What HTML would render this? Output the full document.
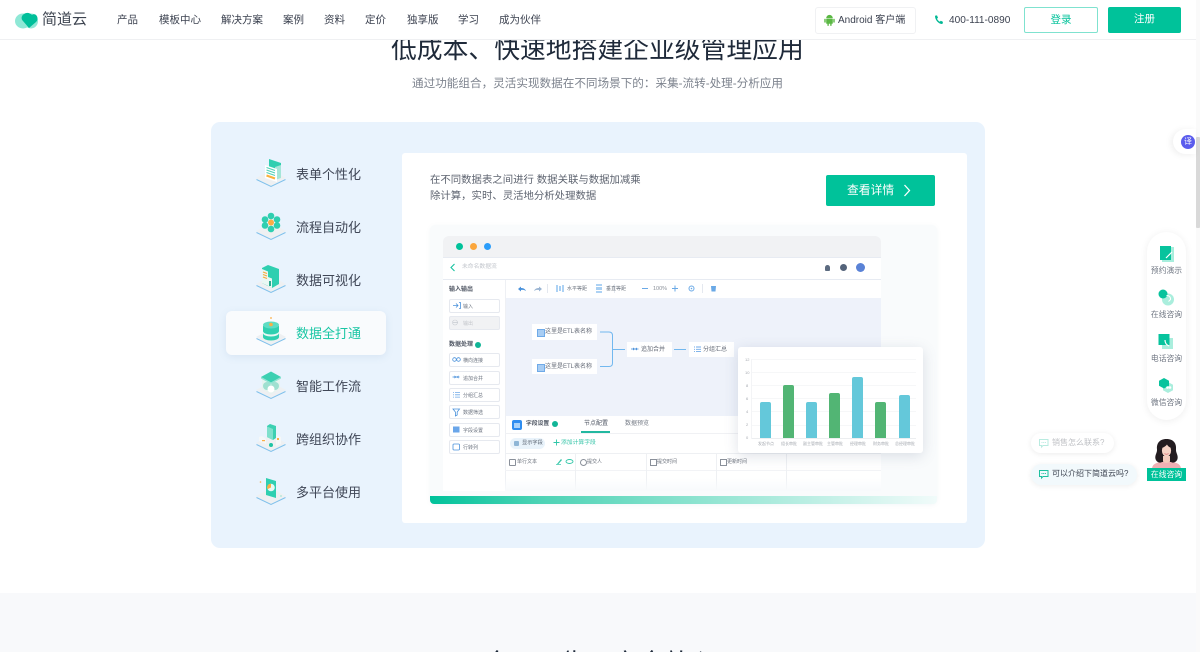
<!DOCTYPE html>
<html lang="zh-CN">
<head>
<meta charset="utf-8">
<title>简道云</title>
<style>
html,body{margin:0;padding:0;width:1200px;height:652px;overflow:hidden;background:#fff}
body{position:relative;font-family:"Liberation Sans","Noto Sans CJK SC",sans-serif;color:#333}
.a,.t{position:absolute}
.t{white-space:nowrap;line-height:16px}
svg{display:block;overflow:visible}
.nav{top:12px;font-size:10.5px;color:#3c4250}
.m{left:296px;font-size:13px;color:#3f4656;line-height:20px}
.ic{left:256px;width:30px;height:28px}
.si{left:449px;width:49px;height:12px;border:1px solid #e6e9ef;border-radius:2px;background:#fff}
.st{left:463px;font-size:5px;color:#6d7480}
.node{background:#fff;height:15px}
.nt{font-size:6px;color:#666c78}
.cl{font-size:4px;color:#a5a9b0}
.bar{position:absolute;width:11px;border-radius:2px 2px 0 0}
.grid{position:absolute;left:751px;width:165px;height:1px;background:#f6f7f8}
.vl{position:absolute;width:1px;background:#eef0f3;top:454px;height:37px}
.sl{font-size:7.8px;color:#6f7682;left:1147px;width:39px;text-align:center}
</style>
</head>
<body>

<!-- scrollbar track -->
<div class="a" style="left:1196px;top:0;width:4px;height:652px;background:#fafafa"></div>

<!-- title -->
<div class="t" style="left:391px;top:35px;line-height:30px;font-size:25.8px;color:#1f2a3a">低成本、快速地搭建企业级管理应用</div>
<div class="t" style="left:412px;top:76px;font-size:11.6px;color:#7d838e">通过功能组合，灵活实现数据在不同场景下的：采集-流转-处理-分析应用</div>

<!-- header -->
<div class="a" style="left:0;top:0;width:1196px;height:39px;background:#fff;border-bottom:1px solid #eff0f2;box-sizing:content-box"></div>
<svg class="a" style="left:15px;top:12px" width="24" height="17" viewBox="0 0 24 17">
  <ellipse cx="8" cy="9" rx="8" ry="7.5" fill="#8fe8d6"/>
  <ellipse cx="16" cy="9" rx="7" ry="7.5" fill="#8fe8d6"/>
  <path d="M9 2c3-2 6-1 8 1 1-1 3-1 4 0 2 2 2 5 0 7l-7 6-6-7C6 7 6 4 9 2z" fill="#00bf9a"/>
</svg>
<div class="t" style="left:42px;top:12px;font-size:15px;color:#3d4450;line-height:16px">简道云</div>
<div class="t nav" style="left:117px">产品</div>
<div class="t nav" style="left:159px">模板中心</div>
<div class="t nav" style="left:221px">解决方案</div>
<div class="t nav" style="left:283px">案例</div>
<div class="t nav" style="left:324px">资料</div>
<div class="t nav" style="left:365px">定价</div>
<div class="t nav" style="left:407px">独享版</div>
<div class="t nav" style="left:458px">学习</div>
<div class="t nav" style="left:499px">成为伙伴</div>

<div class="a" style="left:815px;top:7px;width:99px;height:25px;border:1px solid #f0f1f3;border-radius:3px;background:#fff"></div>
<svg class="a" style="left:824px;top:14px" width="11" height="12" viewBox="0 0 11 12">
  <path d="M2.2 4.2a3.3 3.3 0 0 1 6.6 0z" fill="#5bb844"/>
  <rect x="2.2" y="4.7" width="6.6" height="5" rx=".6" fill="#5bb844"/>
  <rect x=".3" y="4.7" width="1.4" height="4" rx=".7" fill="#5bb844"/>
  <rect x="9.3" y="4.7" width="1.4" height="4" rx=".7" fill="#5bb844"/>
  <rect x="3.4" y="9" width="1.4" height="3" rx=".7" fill="#5bb844"/>
  <rect x="6.2" y="9" width="1.4" height="3" rx=".7" fill="#5bb844"/>
</svg>
<div class="t" style="left:838px;top:14px;line-height:13px;font-size:10px;color:#3c4250">Android 客户端</div>
<svg class="a" style="left:934px;top:15px" width="10" height="10" viewBox="0 0 10 10">
  <path d="M1 .8 3 .4l1 2.4-1 1c.5 1.2 1.5 2.300 2.800 2.900l1-1 2.200 1.200-.5 2C5 9.500 .9 5.200 1 .8z" fill="#00b894"/>
</svg>
<div class="t" style="left:949px;top:14px;line-height:13px;font-size:10.1px;color:#3c4250">400-111-0890</div>
<div class="a" style="left:1024px;top:7px;width:72px;height:24px;border:1px solid #7fe2cf;border-radius:2px;background:#fff;color:#00c29a;font-size:10.5px;line-height:24px;text-align:center">登录</div>
<div class="a" style="left:1108px;top:7px;width:73px;height:26px;border-radius:2px;background:#00c29a;color:#fff;font-size:10.5px;line-height:25px;text-align:center">注册</div>

<!-- main panel -->
<div class="a" style="left:211px;top:122px;width:774px;height:426px;background:#e9f3fd;border-radius:9px"></div>
<div class="a" style="left:402px;top:153px;width:565px;height:370px;background:#fff;border-radius:3px"></div>
<div class="a" style="left:226px;top:311px;width:160px;height:44px;background:#f9fbfd;border-radius:6px;box-shadow:0 2px 8px rgba(90,130,170,.12)"></div>

<!-- menu texts -->
<div class="t m" style="top:165px">表单个性化</div>
<div class="t m" style="top:218px">流程自动化</div>
<div class="t m" style="top:271px">数据可视化</div>
<div class="t m" style="top:324px;color:#19c6a4">数据全打通</div>
<div class="t m" style="top:377px">智能工作流</div>
<div class="t m" style="top:430px">跨组织协作</div>
<div class="t m" style="top:483px">多平台使用</div>

<!-- menu icons -->
<svg class="a ic" style="top:159px" viewBox="0 0 30 28">
  <path d="M0 19 15 11 30 19 15 27z" fill="#eef0f2"/><path d="M0.500 20.500 15 27.500 29.500 20.500" fill="none" stroke="#80c0ea" stroke-width="1"/>
  <path d="M13 0 25 4V19L13 15z" fill="#2fcfb0"/><path d="M19 8 25 6V19L19 21z" fill="#a5e6d8"/>
  <path d="M9 6 21 10V23L9 19z" fill="#fff"/>
  <path d="M10.500 8.500 19 11.500M10.500 11 19 14M10.500 13.500 19 16.500" stroke="#4fd0b6" stroke-width="1"/>
  <path d="M10.500 16.500 19 19.500" stroke="#fbb03b" stroke-width="2"/>
</svg>
<svg class="a ic" style="top:212px" viewBox="0 0 30 28">
  <path d="M0 19 15 11 30 19 15 27z" fill="#eef0f2"/><path d="M0.500 20.500 15 27.500 29.500 20.500" fill="none" stroke="#80c0ea" stroke-width="1"/>
  <g fill="#2fcfb0"><circle cx="15" cy="4" r="3.300"/><circle cx="9" cy="7.500" r="3.300"/><circle cx="21" cy="7.500" r="3.300"/><circle cx="9" cy="13.500" r="3.300"/><circle cx="21" cy="13.500" r="3.300"/><circle cx="15" cy="17" r="3.300"/></g>
  <circle cx="15" cy="10.500" r="3" fill="#fbae45"/>
</svg>
<svg class="a ic" style="top:265px" viewBox="0 0 30 28">
  <path d="M0 19 15 11 30 19 15 27z" fill="#eef0f2"/><path d="M0.500 20.500 15 27.500 29.500 20.500" fill="none" stroke="#80c0ea" stroke-width="1"/>
  <path d="M6 3 12 0 23 4 23 19 16 23 6 18z" fill="#2fcfb0"/><path d="M6 4 12 6.500V20.800L6 18z" fill="#e9f7f3"/><path d="M12 12 16 13.500V23L12 21z" fill="#e9f7f3"/>
  <path d="M7 7l4 1.500M7 9.500l4 1.500M7 12l4 1.500" stroke="#f7a93a" stroke-width="1.200"/><path d="M14 16v5" stroke="#2fa98f" stroke-width="2"/>
</svg>
<svg class="a ic" style="top:318px" viewBox="0 0 30 28">
  <path d="M0 19 15 11 30 19 15 27z" fill="#eef0f2"/><path d="M0.500 20.500 15 27.500 29.500 20.500" fill="none" stroke="#80c0ea" stroke-width="1"/>
  <path d="M7 8v11c0 2 3.600 3.500 8 3.500s8-1.500 8-3.500V8z" fill="#2fd0b0"/><path d="M7 13c0 2 3.600 3.500 8 3.500s8-1.500 8-3.500v2c0 2-3.600 3.500-8 3.500S7 17 7 15z" fill="#e7f8f4"/>
  <ellipse cx="15" cy="7" rx="8" ry="3.500" fill="#5edcc3"/><circle cx="15" cy="6.500" r="1.800" fill="#fbae45"/><circle cx="15" cy="0" r=".9" fill="#fbae45"/>
</svg>
<svg class="a ic" style="top:371px" viewBox="0 0 30 28">
  <path d="M0 19 15 11 30 19 15 27z" fill="#eef0f2"/><path d="M0.500 20.500 15 27.500 29.500 20.500" fill="none" stroke="#80c0ea" stroke-width="1"/>
  <path d="M6 8V18L15 23 24 18V8z" fill="#e6f4f0"/><circle cx="11" cy="15" r="4" fill="#9fe0d0"/><circle cx="19" cy="15" r="4" fill="#9fe0d0"/><circle cx="15" cy="18" r="3.500" fill="#fff"/>
  <path d="M5 6 15 .5 25 6 15 11.500z" fill="#3cd0b2"/><path d="M5 6V7.500L15 13 25 7.500V6L15 11.500z" fill="#8fe3d2"/>
</svg>
<svg class="a ic" style="top:424px" viewBox="0 0 30 28">
  <path d="M0 19 15 11 30 19 15 27z" fill="#eef0f2"/><path d="M0.500 20.500 15 27.500 29.500 20.500" fill="none" stroke="#80c0ea" stroke-width="1"/>
  <path d="M11 2 14 0 20 2V14L17 16 11 13z" fill="#3cd0b2"/><path d="M11 2.500 17 5V16L11 13z" fill="#7fe0cc"/>
  <path d="M20 11l5 2v7l-5 2z" fill="#f5f7f8"/><path d="M6 12 3 13v4l7 3V15z" fill="#f5f7f8"/>
  <circle cx="15" cy="21" r="2" fill="#1fc4a4"/><rect x="6" y="16" width="3" height="1.200" fill="#fbae45"/><rect x="21" y="14" width="2" height="2" fill="#fbae45"/>
</svg>
<svg class="a ic" style="top:477px" viewBox="0 0 30 28">
  <path d="M0 19 15 11 30 19 15 27z" fill="#eef0f2"/><path d="M0.500 20.500 15 27.500 29.500 20.500" fill="none" stroke="#80c0ea" stroke-width="1"/>
  <path d="M10 0 20 3V20L10 17z" fill="#2fcfb0" transform="translate(0,1)"/><circle cx="15" cy="10.500" r="3.800" fill="#e8f8f4"/><path d="M15 10.500V6.700a3.800 3.800 0 0 0-3.500 5.400z" fill="#fbae45"/>
  <circle cx="4.500" cy="5" r=".8" fill="#fbae45"/><circle cx="25" cy="19" r="1" fill="#b8e8dc"/>
</svg>

<!-- description + button -->
<div class="t" style="left:430px;top:173px;font-size:10.4px;color:#5e6470">在不同数据表之间进行 数据关联与数据加减乘</div>
<div class="t" style="left:430px;top:189px;font-size:10.4px;color:#5e6470">除计算，实时、灵活地分析处理数据</div>
<div class="a" style="left:826px;top:175px;width:109px;height:31px;background:#00c29a;border-radius:2px"></div>
<div class="t" style="left:847px;top:182px;font-size:11.8px;color:#fff">查看详情</div>
<svg class="a" style="left:903px;top:184px" width="8" height="13" viewBox="0 0 8 13"><path d="M1.500 1 6.500 6.500 1.500 12" fill="none" stroke="#fff" stroke-width="1.300"/></svg>

<!-- mock app container -->
<div class="a" style="left:430px;top:225px;width:507px;height:279px;background:#f9fbfc;border-radius:5px;box-shadow:0 1px 4px rgba(120,140,160,.08)"></div>
<div class="a" style="left:443px;top:236px;width:438px;height:21px;background:#f1f2f4;border-radius:6px 6px 0 0"></div>
<div class="a" style="left:443px;top:257px;width:438px;height:234px;background:#fff"></div>
<div class="a" style="left:443px;top:257px;width:438px;height:1px;background:#e7ebf2"></div>
<div class="a" style="left:443px;top:279px;width:438px;height:1px;background:#e7ebf2"></div>
<div class="a" style="left:505px;top:280px;width:1px;height:211px;background:#eef0f4"></div>
<div class="a" style="left:506px;top:298px;width:375px;height:118px;background:#eef2fa"></div>
<div class="a" style="left:456px;top:243px;width:7px;height:7px;border-radius:50%;background:#00c29a"></div>
<div class="a" style="left:470px;top:243px;width:7px;height:7px;border-radius:50%;background:#fba63c"></div>
<div class="a" style="left:484px;top:243px;width:7px;height:7px;border-radius:50%;background:#2b9dfa"></div>

<svg class="a" style="left:450px;top:263px" width="6" height="9" viewBox="0 0 6 9"><path d="M4.500 1 1 4.500 4.500 8" fill="none" stroke="#17c3a0" stroke-width="1.100"/></svg>
<div class="t" style="left:462px;top:259px;font-size:5.8px;color:#c2c6cc">未命名数据流</div>
<div class="a" style="left:825px;top:265px;width:5px;height:6px;background:#5c6b80;border-radius:2.500px 2.500px 1px 1px"></div>
<div class="a" style="left:840px;top:264px;width:7px;height:7px;background:#54637a;border-radius:50%"></div>
<div class="a" style="left:856px;top:263px;width:9px;height:9px;background:#5a82d6;border-radius:50%"></div>

<!-- toolbar -->
<svg class="a" style="left:505px;top:280px" width="376" height="18" viewBox="0 0 376 18">
  <path d="M13 9l3-2.500v1.500c2 0 4 .5 5 3-1.500-1-3-1.200-5-1v1.500z" fill="#4b92db"/>
  <path d="M37 9l-3-2.500v1.500c-2 0-4 .5-5 3 1.500-1 3-1.200 5-1v1.500z" fill="#9ab4d2"/>
  <rect x="42" y="4" width="1" height="9" fill="#e4e8ef"/>
  <path d="M52 5v7M58 5v7" stroke="#5ba5e8" stroke-width="1"/><path d="M54 6v5h2V6z" fill="#a8cff2"/>
  <path d="M91 5h6M91 12h6" stroke="#5ba5e8" stroke-width="1"/><rect x="91" y="7" width="6" height="3" fill="#a8cff2"/>
  <rect x="109" y="4" width="1" height="9" fill="#e4e8ef"/>
  <path d="M137 8.500h6" stroke="#6aa9e6" stroke-width="1"/>
  <path d="M167 8.500h6M170 5.500v6" stroke="#6aa9e6" stroke-width="1"/>
  <circle cx="186.500" cy="8.500" r="2.500" fill="none" stroke="#6aa9e6" stroke-width="1"/><circle cx="186.500" cy="8.500" r=".8" fill="#6aa9e6"/>
  <rect x="197" y="4" width="1" height="9" fill="#e4e8ef"/>
  <path d="M206 6h5l-.5 5.500h-4z" fill="#6aa9e6"/>
</svg>
<div class="t cl" style="left:567px;top:281px;font-size:5px;color:#6e7580">水平等距</div>
<div class="t cl" style="left:606px;top:281px;font-size:5px;color:#6e7580">垂直等距</div>
<div class="t cl" style="left:653px;top:281px;font-size:5.500px;color:#8a9099">100%</div>

<!-- sidebar -->
<div class="t" style="left:449px;top:282px;font-size:6px;color:#4f5663;font-weight:bold">输入输出</div>
<div class="a si" style="top:299px"></div>
<div class="t st" style="top:299px">输入</div>
<div class="a si" style="top:316px;background:#f1f2f4"></div>
<div class="t st" style="top:316px;color:#c2c5ca">输出</div>
<div class="t" style="left:449px;top:337px;font-size:6px;color:#4f5663;font-weight:bold">数据处理</div>
<div class="a" style="left:475px;top:342px;width:6px;height:6px;border-radius:50%;background:#11b597"></div>
<div class="a si" style="top:353px"></div><div class="t st" style="top:353px">横向连接</div>
<div class="a si" style="top:371px"></div><div class="t st" style="top:371px">追加合并</div>
<div class="a si" style="top:388px"></div><div class="t st" style="top:388px">分组汇总</div>
<div class="a si" style="top:405px"></div><div class="t st" style="top:405px">数据筛选</div>
<div class="a si" style="top:423px"></div><div class="t st" style="top:423px">字段设置</div>
<div class="a si" style="top:440px"></div><div class="t st" style="top:440px">行转列</div>
<svg class="a" style="left:452px;top:300px" width="10" height="152" viewBox="0 0 10 152">
  <path d="M1 5.500h5M4 3.500l2 2-2 2" fill="none" stroke="#4b92db" stroke-width=".8"/><path d="M7 2.500h1.500v6H7" fill="none" stroke="#4b92db" stroke-width=".8"/>
  <path d="M1 22.500h5" stroke="#c8ccd2" stroke-width=".8"/><circle cx="3" cy="22.500" r="2.500" fill="none" stroke="#c8ccd2" stroke-width=".6"/>
  <circle cx="2.500" cy="59.500" r="1.800" fill="none" stroke="#4b92db" stroke-width=".8"/><circle cx="6.500" cy="59.500" r="1.800" fill="none" stroke="#4b92db" stroke-width=".8"/>
  <path d="M0.500 77h7" stroke="#4b92db" stroke-width=".8"/><path d="M2.500 75.500l2 1.500 2-1.500v3l-2-1.500-2 1.500z" fill="#4b92db"/>
  <path d="M1 92.500h1M3 92.500h5M1 94.800h1M3 94.800h5M1 97.100h1M3 97.100h5" stroke="#6fa9e8" stroke-width=".8"/>
  <path d="M1 109h6.500l-2.300 3v3l-1.800 1v-4z" fill="none" stroke="#4b92db" stroke-width=".8"/>
  <rect x="1" y="126.500" width="6.500" height="6" fill="#6aa6ea"/>
  <rect x="1" y="144" width="6.500" height="6" rx="1" fill="none" stroke="#4b92db" stroke-width=".8"/>
</svg>

<!-- flow connectors -->
<svg class="a" style="left:525px;top:320px" width="215" height="60" viewBox="0 0 215 60">
  <path d="M75 12h9q3.500 0 3.500 3.500V43q0 3.500-3.500 3.500h-9" fill="none" stroke="#72b8ef" stroke-width="1"/>
  <path d="M87.500 29.500H100M149 29.500h12" stroke="#72b8ef" stroke-width="1"/>
</svg>
<div class="a node" style="left:532px;top:324px;width:65px;height:16px"></div>
<div class="a node" style="left:532px;top:359px;width:65px"></div>
<div class="a node" style="left:627px;top:342px;width:45px"></div>
<div class="a node" style="left:689px;top:342px;width:45px"></div>
<div class="a" style="left:537px;top:329px;width:6px;height:6px;background:#a8cdf3;border:.5px solid #6faae8"></div>
<div class="a" style="left:537px;top:364px;width:6px;height:6px;background:#a8cdf3;border:.5px solid #6faae8"></div>
<svg class="a" style="left:631px;top:346px" width="8" height="6" viewBox="0 0 8 6"><path d="M0 3h7.500" stroke="#4b92db" stroke-width=".8"/><path d="M2 1.500l2 1.500 2-1.500v3l-2-1.500-2 1.500z" fill="#4b92db"/></svg>
<svg class="a" style="left:694px;top:346px" width="7" height="7" viewBox="0 0 7 7"><path d="M0 1h1M2 1h5M0 3.300h1M2 3.300h5M0 5.600h1M2 5.600h5" stroke="#6fa9e8" stroke-width=".9"/></svg>
<div class="t nt" style="left:545px;top:324px">这里是ETL表名称</div>
<div class="t nt" style="left:545px;top:359px">这里是ETL表名称</div>
<div class="t nt" style="left:641px;top:342px">追加合并</div>
<div class="t nt" style="left:703px;top:342px">分组汇总</div>

<!-- bottom panel -->
<div class="a" style="left:512px;top:420px;width:10px;height:10px;border-radius:2px;background:#2f8df0"></div>
<div class="a" style="left:514px;top:423px;width:6px;height:5px;background:#a8d2fa"></div>
<div class="t" style="left:526px;top:416px;font-size:5.800px;color:#4f5663;font-weight:bold">字段设置</div>
<div class="a" style="left:552px;top:421px;width:6px;height:6px;border-radius:50%;background:#11b597"></div>
<div class="t" style="left:584px;top:416px;font-size:6px;color:#4f5663">节点配置</div>
<div class="t" style="left:625px;top:416px;font-size:6px;color:#767c87">数据预览</div>
<div class="a" style="left:581px;top:431px;width:29px;height:2px;background:#22b8a0"></div>
<div class="a" style="left:505px;top:433px;width:376px;height:1px;background:#f0f1f4"></div>
<div class="a" style="left:510px;top:438px;width:35px;height:11px;border-radius:6px;background:#e9f3fb"></div>
<div class="a" style="left:514px;top:441px;width:5px;height:5px;background:#8fb6d6;border-radius:1px"></div>
<div class="t" style="left:522px;top:435px;font-size:5.200px;color:#56606e">显示字段</div>
<svg class="a" style="left:553px;top:439px" width="7" height="7" viewBox="0 0 7 7"><path d="M3.500 .5v6M.5 3.500h6" stroke="#2fc6a8" stroke-width=".9"/></svg>
<div class="t" style="left:561px;top:435px;font-size:5.800px;color:#35c4a8">添加计算字段</div>

<div class="a" style="left:505px;top:453px;width:376px;height:1px;background:#eef0f3"></div>
<div class="a" style="left:505px;top:470px;width:376px;height:1px;background:#f2f3f6"></div>
<div class="vl" style="left:575px"></div><div class="vl" style="left:646px"></div><div class="vl" style="left:716px"></div><div class="vl" style="left:786px"></div>
<div class="a" style="left:509px;top:459px;width:5px;height:5px;border:.7px solid #8a909a;border-radius:1px"></div>
<div class="a" style="left:580px;top:459px;width:5px;height:5px;border:.7px solid #8a909a;border-radius:50%"></div>
<div class="a" style="left:650px;top:459px;width:5px;height:5px;border:.7px solid #8a909a"></div>
<div class="a" style="left:720px;top:459px;width:5px;height:5px;border:.7px solid #8a909a"></div>
<div class="t" style="left:517px;top:454px;font-size:5px;color:#6a707b">单行文本</div>
<div class="t" style="left:587px;top:454px;font-size:5px;color:#6a707b">提交人</div>
<div class="t" style="left:657px;top:454px;font-size:5px;color:#6a707b">提交时间</div>
<div class="t" style="left:727px;top:454px;font-size:5px;color:#6a707b">更新时间</div>
<svg class="a" style="left:556px;top:458px" width="18" height="7" viewBox="0 0 18 7"><path d="M1 6 5 1l1 1-4 4.500z" fill="#36c7a9"/><path d="M0 6.500h5" stroke="#36c7a9" stroke-width=".7"/><ellipse cx="13.500" cy="3.500" rx="3.500" ry="2" fill="none" stroke="#36c7a9" stroke-width=".9"/></svg>
<div class="a" style="left:505px;top:478px;width:376px;height:13px;background:linear-gradient(rgba(248,250,252,0),#f8fafc)"></div>

<!-- gradient bar -->
<div class="a" style="left:430px;top:496px;width:507px;height:8px;border-radius:0 0 4px 4px;background:linear-gradient(90deg,#00c29a 0%,#4ed3b5 22%,#9ce7d6 60%,#f1fbfa 100%)"></div>

<!-- chart -->
<div class="a" style="left:738px;top:347px;width:185px;height:106px;background:#fff;border-radius:3px;box-shadow:0 3px 14px rgba(90,105,135,.2)"></div>
<div class="grid" style="top:359px"></div><div class="grid" style="top:372px"></div><div class="grid" style="top:385px"></div><div class="grid" style="top:398px"></div><div class="grid" style="top:411px"></div><div class="grid" style="top:425px"></div><div class="grid" style="top:438px;background:#eceef0"></div>
<div class="a" style="left:751px;top:359px;width:1px;height:80px;background:#f3f4f6"></div>
<div class="t cl" style="left:745px;top:352px">12</div><div class="t cl" style="left:745px;top:365px">10</div><div class="t cl" style="left:746px;top:378px">8</div><div class="t cl" style="left:746px;top:391px">6</div><div class="t cl" style="left:746px;top:404px">4</div><div class="t cl" style="left:746px;top:417px">2</div><div class="t cl" style="left:746px;top:430px">0</div>
<div class="bar" style="left:760px;top:402px;height:36px;background:#64c8da"></div>
<div class="bar" style="left:783px;top:385px;height:53px;background:#52b574"></div>
<div class="bar" style="left:806px;top:402px;height:36px;background:#64c8da"></div>
<div class="bar" style="left:829px;top:393px;height:45px;background:#52b574"></div>
<div class="bar" style="left:852px;top:377px;height:61px;background:#64c8da"></div>
<div class="bar" style="left:875px;top:402px;height:36px;background:#52b574"></div>
<div class="bar" style="left:899px;top:395px;height:43px;background:#64c8da"></div>
<div class="t cl" style="left:758px;top:436px">发起节点</div>
<div class="t cl" style="left:781px;top:436px">组长审批</div>
<div class="t cl" style="left:803px;top:436px">副主管审批</div>
<div class="t cl" style="left:827px;top:436px">主管审批</div>
<div class="t cl" style="left:850px;top:436px">经理审批</div>
<div class="t cl" style="left:873px;top:436px">财务审批</div>
<div class="t cl" style="left:895px;top:436px">总经理审批</div>

<!-- lower section -->
<div class="a" style="left:0;top:593px;width:1196px;height:59px;background:#f8f9fb"></div>
<div class="t" style="left:484px;top:649px;line-height:30px;font-size:25.800px;color:#1f2a3a">全面可靠，安全放心</div>

<!-- scrollbar thumb -->
<div class="a" style="left:1196px;top:137px;width:4px;height:91px;background:#d9d9d9;border-radius:1px"></div>

<!-- translate pill -->
<div class="a" style="left:1173px;top:129px;width:23px;height:25px;background:#fff;border-radius:13px 0 0 13px;box-shadow:-2px 1px 7px rgba(0,0,0,.07)"></div>
<div class="a" style="left:1181px;top:135px;width:14px;height:14px;border-radius:50%;background:#5a5ced;color:#fff;font-size:8px;line-height:14px;text-align:center">译</div>

<!-- float menu -->
<div class="a" style="left:1147px;top:232px;width:39px;height:188px;background:#fff;border-radius:20px;box-shadow:0 1px 8px rgba(0,0,0,.07)"></div>
<svg class="a" style="left:1159px;top:245px" width="16" height="18" viewBox="0 0 16 18">
  <rect x="3" y="2" width="12" height="15" fill="#a8eedd"/><rect x="1" y="1" width="11" height="14" fill="#07c39d"/>
  <path d="M7 13 13 7" stroke="#fff" stroke-width="1.200"/>
</svg>
<svg class="a" style="left:1158px;top:289px" width="16" height="17" viewBox="0 0 16 17">
  <circle cx="10" cy="10.500" r="6" fill="#aaeedd"/><circle cx="5" cy="5" r="4.500" fill="#07c39d"/>
  <path d="M8.500 6.500a3.500 3.500 0 0 1 4 4l-2 2" fill="none" stroke="#fff" stroke-width="1"/>
</svg>
<svg class="a" style="left:1158px;top:333px" width="16" height="17" viewBox="0 0 16 17">
  <rect x="4" y="5" width="11" height="11" fill="#aaeedd"/><rect x="0.500" y="1" width="11" height="11" fill="#07c39d"/>
  <path d="M7 7c0 3 1.500 5 4 6" fill="none" stroke="#fff" stroke-width="1.200"/>
</svg>
<svg class="a" style="left:1158px;top:377px" width="16" height="17" viewBox="0 0 16 17">
  <path d="M10 5l5 2.700v5.600L10 16l-5-2.700V7.700z" fill="#aaeedd"/><path d="M6 1l5 2.700v5L6 11.500 1 8.700v-5z" fill="#07c39d"/>
  <circle cx="9.500" cy="10.500" r="1.300" fill="#fff"/><circle cx="12" cy="10.500" r="1.300" fill="#fff"/>
</svg>
<div class="t sl" style="top:263px">预约演示</div>
<div class="t sl" style="top:307px">在线咨询</div>
<div class="t sl" style="top:351px">电话咨询</div>
<div class="t sl" style="top:395px">微信咨询</div>

<!-- chat bubbles -->
<div class="a" style="left:1031px;top:433px;width:83px;height:20px;border-radius:10px;background:#fff;box-shadow:0 1px 6px rgba(0,0,0,.08)"></div>
<svg class="a" style="left:1039px;top:439px" width="10" height="9" viewBox="0 0 10 9"><path d="M.5.500h8.500v6H4L2.500 8V6.500h-2z" fill="none" stroke="#b9ebe0" stroke-width="1"/><path d="M2.500 3.500h4.500" stroke="#b9ebe0" stroke-width="1" stroke-dasharray="1 .7"/></svg>
<div class="t" style="left:1052px;top:435px;font-size:8px;color:#bfc1c5">销售怎么联系?</div>
<div class="a" style="left:1031px;top:464px;width:106px;height:21px;border-radius:11px;background:#f2f9fc;box-shadow:0 1px 6px rgba(0,0,0,.07)"></div>
<svg class="a" style="left:1039px;top:470px" width="10" height="9" viewBox="0 0 10 9"><path d="M.5.500h8.500v6H4L2.500 8V6.500h-2z" fill="none" stroke="#1fc09f" stroke-width="1"/><path d="M2.500 3.500h4.500" stroke="#1fc09f" stroke-width="1" stroke-dasharray="1 .7"/></svg>
<div class="t" style="left:1052px;top:466px;font-size:8px;color:#3e4552">可以介绍下简道云吗?</div>

<!-- avatar -->
<svg class="a" style="left:1150px;top:439px" width="33" height="30" viewBox="0 0 33 30">
  <path d="M2 30c0-4 3-6 8-7h13c5 1 8 3 8 7z" fill="#eeb0b4"/>
  <path d="M16.500 0C9 0 6.500 5 7 10c.4 4-2.500 6-1.500 10 1 3 4 4.500 6.500 3h9c2.500 1.500 5.500 0 6.500-3 1-4-1.900-6-1.500-10 .5-5-2-10-9.500-10z" fill="#231c20"/>
  <path d="M13 17h7v5.500c-1.500 1.800-5.500 1.800-7 0z" fill="#f3cbbd"/>
  <ellipse cx="16.500" cy="11.500" rx="4.600" ry="6" fill="#f6d3c6"/>
  <path d="M11.500 9c2-.5 4.500-2 5.500-3.500 1 2 3 3 4.500 3.500.2-4-2.500-5.500-5-5.500S11.300 5 11.500 9z" fill="#231c20"/>
  <path d="M14.500 14.500c1 1 3 1 4 0" stroke="#d96b70" stroke-width=".8" fill="none"/>
</svg>
<div class="a" style="left:1147px;top:468px;width:39px;height:13px;background:#00c29a;color:#fff;font-size:7.800px;line-height:13px;text-align:center">在线咨询</div>

</body>
</html>
